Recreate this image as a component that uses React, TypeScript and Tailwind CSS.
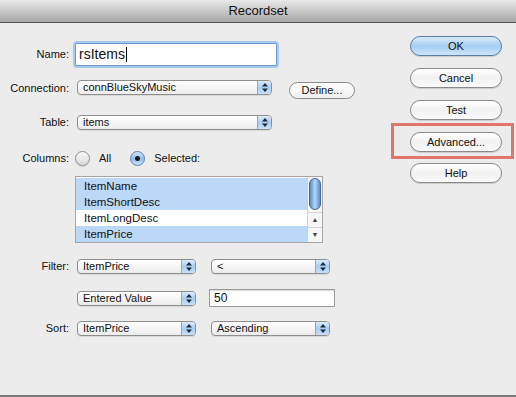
import React from "react";

const font = { fontFamily: '"Liberation Sans", Arial, sans-serif' };

function Arrows() {
  return (
    <svg width="6" height="9" viewBox="0 0 6 9" className="block">
      <path d="M3 0 L6 3.5 H0 Z" fill="#1e2a3a" />
      <path d="M3 9 L6 5.5 H0 Z" fill="#1e2a3a" />
    </svg>
  );
}

function Select({ value, width }: { value: string; width: string }) {
  return (
    <div
      className={`${width} flex h-[15px] shrink-0 items-stretch overflow-hidden rounded-[4px] border border-[#8e8e8e] bg-gradient-to-b from-white to-[#ececec] shadow-[0_1px_0_rgba(0,0,0,0.08)]`}
    >
      <span className="flex-1 truncate pl-[5px] text-[11px] leading-[13px] text-[#111]">
        {value}
      </span>
      <span className="flex w-[14px] items-center justify-center border-l border-[#8ea6c4] bg-gradient-to-b from-[#dbeafb] via-[#a9cdf2] to-[#c9e0f8]">
        <Arrows />
      </span>
    </div>
  );
}

function Label({ text }: { text: string }) {
  return (
    <span className="w-[70px] shrink-0 pr-[1px] text-right text-[11px] text-[#111]">
      {text}
    </span>
  );
}

function PillButton({ text, primary }: { text: string; primary?: boolean }) {
  return (
    <div
      className={`flex h-[20px] w-[92px] items-center justify-center rounded-full border text-[11px] text-[#111] shadow-[0_1px_1px_rgba(0,0,0,0.15)] ${
        primary
          ? "border-[#5b7ea6] bg-gradient-to-b from-[#d9ebfb] via-[#a6cdf1] to-[#cfe6fb]"
          : "border-[#8a8a8a] bg-gradient-to-b from-white via-[#f1f1f1] to-[#fafafa]"
      }`}
    >
      {text}
    </div>
  );
}

function Radio({ checked }: { checked?: boolean }) {
  return checked ? (
    <span className="flex h-[15px] w-[15px] shrink-0 items-center justify-center rounded-full border border-[#5b7ea6] bg-gradient-to-b from-[#d3e7fb] via-[#8fbfeb] to-[#c6e0f8]">
      <span className="h-[5px] w-[5px] rounded-full bg-[#1a1a1a]" />
    </span>
  ) : (
    <span className="block h-[15px] w-[15px] shrink-0 rounded-full border border-[#8e8e8e] bg-gradient-to-b from-[#fbfbfb] to-[#d8d8d8] shadow-[0_1px_1px_rgba(0,0,0,0.12)]" />
  );
}

const columns = [
  { name: "ItemName", selected: true },
  { name: "ItemShortDesc", selected: true },
  { name: "ItemLongDesc", selected: false },
  { name: "ItemPrice", selected: true },
];

export default function App() {
  return (
    <div
      className="flex h-[397px] w-[516px] flex-col overflow-hidden bg-[#ececec]"
      style={font}
    >
      {/* Title bar */}
      <div className="flex h-[23px] shrink-0 items-center justify-center border-b border-[#555] bg-gradient-to-b from-[#e9e9e9] to-[#a8a8a8] text-[13px] text-[#111]">
        Recordset
      </div>

      <div className="flex flex-1">
        {/* Form */}
        <div className="flex w-[391px] flex-col">
          {/* Name */}
          <div className="mt-[20px] flex h-[23px] items-center gap-[5px]">
            <Label text="Name:" />
            <div className="flex h-[23px] w-[202px] items-center rounded-[2px] border border-[#6d97cf] bg-white pl-[3px] text-[14px] text-[#111] shadow-[0_0_0_2px_#a7c8ee]">
              rsItems
              <span className="ml-[1px] h-[15px] w-[1px] bg-black" />
            </div>
          </div>

          {/* Connection */}
          <div className="mt-[14px] flex h-[19px] items-start gap-[7px]">
            <Label text="Connection:" />
            <Select value="connBlueSkyMusic" width="w-[195px]" />
            <div className="ml-[10px] mt-[2px] flex h-[17px] w-[66px] items-center justify-center rounded-full border border-[#8a8a8a] bg-gradient-to-b from-white to-[#f0f0f0] text-[11px] text-[#111]">
              Define...
            </div>
          </div>

          {/* Table */}
          <div className="mt-[16px] flex h-[15px] items-center gap-[7px]">
            <Label text="Table:" />
            <Select value="items" width="w-[195px]" />
          </div>

          {/* Columns */}
          <div className="mt-[20px] flex h-[16px] items-center">
            <Label text="Columns:" />
            <span className="ml-[5px] flex">
              <Radio />
            </span>
            <span className="ml-[9px] text-[11px] text-[#111]">All</span>
            <span className="ml-[19px] flex">
              <Radio checked />
            </span>
            <span className="ml-[9px] text-[11px] text-[#111]">Selected:</span>
          </div>

          {/* Column list */}
          <div className="ml-[75px] mt-[10px] flex h-[67px] w-[248px] border border-[#a5a5a5] bg-white">
            <div className="flex flex-1 flex-col pt-[1px]">
              {columns.map((c) => (
                <div
                  key={c.name}
                  className={`h-[16px] pl-[8px] text-[11.5px] leading-[16px] text-[#111] ${
                    c.selected ? "bg-[#bcd8f7]" : "bg-white"
                  }`}
                >
                  {c.name}
                </div>
              ))}
            </div>
            <div className="flex w-[15px] flex-col border-l border-[#cfcfcf] bg-[#f6f6f6]">
              <div className="mx-auto mt-[1px] h-[32px] w-[12px] rounded-full border border-[#46688f] bg-gradient-to-r from-[#5d8fcb] via-[#b5d6f6] to-[#5d8fcb]" />
              <div className="flex-1" />
              <div className="flex h-[15px] items-center justify-center border-t border-[#d5d5d5] text-[7px] text-[#444]">
                ▲
              </div>
              <div className="flex h-[15px] items-center justify-center border-t border-[#d5d5d5] text-[7px] text-[#444]">
                ▼
              </div>
            </div>
          </div>

          {/* Filter */}
          <div className="mt-[16px] flex h-[15px] items-center gap-[7px]">
            <Label text="Filter:" />
            <Select value="ItemPrice" width="w-[119px]" />
            <span className="ml-[8px] flex">
              <Select value="<" width="w-[119px]" />
            </span>
          </div>

          {/* Entered value */}
          <div className="mt-[15px] flex h-[18px] items-center gap-[7px]">
            <span className="w-[70px] shrink-0" />
            <Select value="Entered Value" width="w-[119px]" />
            <div className="ml-[6px] flex h-[18px] w-[126px] items-center border border-[#9a9a9a] bg-white pl-[4px] text-[12px] text-[#111] shadow-[inset_0_1px_1px_rgba(0,0,0,0.15)]">
              50
            </div>
          </div>

          {/* Sort */}
          <div className="mt-[14px] flex h-[15px] items-center gap-[7px]">
            <Label text="Sort:" />
            <Select value="ItemPrice" width="w-[119px]" />
            <span className="ml-[8px] flex">
              <Select value="Ascending" width="w-[119px]" />
            </span>
          </div>
        </div>

        {/* Buttons */}
        <div className="flex w-[123px] flex-col">
          <div className="ml-[19px] mt-[13px]">
            <PillButton text="OK" primary />
          </div>
          <div className="ml-[19px] mt-[12px]">
            <PillButton text="Cancel" />
          </div>
          <div className="ml-[19px] mt-[12px]">
            <PillButton text="Test" />
          </div>
          <div className="mt-[3px] border-[3px] border-[#e0756b] pb-[4px] pl-[16px] pt-[6px]">
            <PillButton text="Advanced..." />
          </div>
          <div className="ml-[19px] mt-[4px]">
            <PillButton text="Help" />
          </div>
        </div>
      </div>

      <div className="h-[2px] shrink-0 bg-[#7a7a7a]" />
    </div>
  );
}
